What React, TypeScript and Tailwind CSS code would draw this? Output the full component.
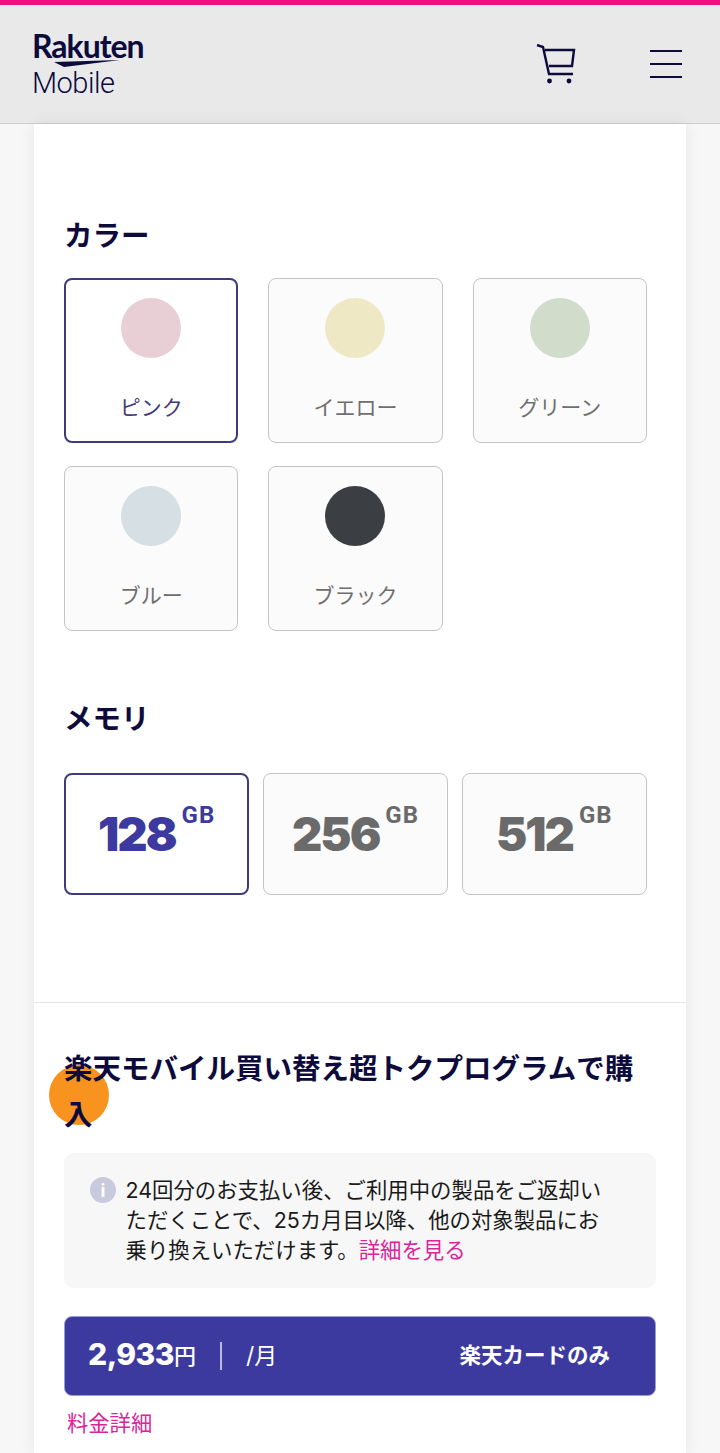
const jp = "font-['Inter','Noto_Sans_CJK_JP',sans-serif]";

const colors = [
  { name: "ピンク", swatch: "bg-[#e8cfd5]", active: true },
  { name: "イエロー", swatch: "bg-[#efe8c4]", active: false },
  { name: "グリーン", swatch: "bg-[#d2dccb]", active: false },
  { name: "ブルー", swatch: "bg-[#d5dfe4]", active: false },
  { name: "ブラック", swatch: "bg-[#3b3e42]", active: false },
];

const memory = [
  { size: "128", active: true },
  { size: "256", active: false },
  { size: "512", active: false },
];

function Logo() {
  return (
    <div className="flex w-[112px] flex-col">
      <span className="font-['Lato',sans-serif] text-[32px] leading-[28px] font-bold tracking-[-1px] text-[#0d0a3c]">Rakuten</span>
      <svg width="90" height="8" viewBox="0 0 90 8" className="ml-[22px]">
        <path d="M0 2 L66 0 L10 7 Z" fill="#0d0a3c" />
      </svg>
      <span className="mt-[2px] font-['Roboto',sans-serif] text-[29px] leading-[27px] font-light tracking-[-0.5px] text-[#0d0a3c]">Mobile</span>
    </div>
  );
}

function CartIcon() {
  return (
    <svg width="40" height="40" viewBox="0 0 40 40" fill="none" stroke="#0d0a3c" strokeWidth="2.4">
      <path d="M1 1 L7 3 L13 30 H37" />
      <path d="M9 6 H38 L36 22 H13" />
      <circle cx="13.5" cy="37" r="2.4" fill="#0d0a3c" stroke="none" />
      <circle cx="33" cy="37" r="2.4" fill="#0d0a3c" stroke="none" />
    </svg>
  );
}

function MenuIcon() {
  return (
    <div className="flex w-[32px] flex-col gap-[10.5px]">
      <span className="h-[2.5px] bg-[#0d0a3c]" />
      <span className="h-[2.5px] bg-[#0d0a3c]" />
      <span className="h-[2.5px] bg-[#0d0a3c]" />
    </div>
  );
}

function ColorCard({ name, swatch, active }: { name: string; swatch: string; active: boolean }) {
  return (
    <div
      className={
        active
          ? "flex h-[165px] flex-col items-center rounded-lg border-2 border-[#3f3a7e] bg-white pt-[18px] text-[#3f3a7e]"
          : "flex h-[165px] flex-col items-center rounded-lg border border-[#c4c4c4] bg-[#fbfbfb] pt-[19px] text-[#6f6f6f]"
      }
    >
      <span className={`h-[60px] w-[60px] rounded-full ${swatch}`} />
      <span className="mt-[34px] text-[21px] leading-[32px]">{name}</span>
    </div>
  );
}

function MemoryCard({ size, active }: { size: string; active: boolean }) {
  return (
    <div
      className={
        active
          ? "flex h-[122px] items-start justify-center rounded-lg border-2 border-[#3f3a7e] bg-white pt-[29px] text-[#3c3a9f]"
          : "flex h-[122px] items-start justify-center rounded-lg border border-[#c4c4c4] bg-[#fbfbfb] pt-[30px] text-[#6a6a6a]"
      }
    >
      <span className="font-['Inter',sans-serif] text-[47px] leading-[60px] font-black tracking-[-2px]">{size}</span>
      <span className="ml-[6px] font-['Roboto',sans-serif] text-[24px] leading-[22px] font-bold tracking-[1px]">GB</span>
    </div>
  );
}

export default function App() {
  return (
    <div className={`h-[1453px] overflow-hidden bg-[#f7f7f7] ${jp}`}>
      <div className="h-[5px] bg-[#eb0f80]" />
      <header className="flex h-[119px] items-center justify-between border-b border-[#cfcfcf] bg-[#e9e9ea] pr-[38px] pl-[32px]">
        <Logo />
        <div className="flex items-center gap-[74px]">
          <CartIcon />
          <MenuIcon />
        </div>
      </header>

      <main className="relative mx-[34px] h-[1329px] bg-white shadow-[0_0_14px_rgba(0,0,0,0.08)]">
        <section className="pt-[90px] pr-[39px] pl-[30px]">
          <h2 className="text-[28.5px] leading-[44px] font-bold text-[#0d0a3c]">カラー</h2>
          <div className="mt-[20px] grid grid-cols-3 gap-x-[30px] gap-y-[23px]">
            {colors.map((c) => (
              <ColorCard key={c.name} {...c} />
            ))}
          </div>

          <h2 className="mt-[66px] text-[28.5px] leading-[44px] font-bold text-[#0d0a3c]">メモリ</h2>
          <div className="mt-[32px] grid grid-cols-3 gap-x-[13.5px]">
            {memory.map((m) => (
              <MemoryCard key={m.size} {...m} />
            ))}
          </div>
        </section>

        <div className="mt-[107px] border-t border-[#e6e6e6] pt-[43px] pr-[30px] pl-[30px]">
          <span className="absolute top-[941px] left-[15px] h-[60px] w-[60px] rounded-full bg-[#f7931e]" />
          <h2 className="relative text-[28.5px] leading-[46px] font-bold text-[#0d0a3c]">楽天モバイル買い替え超トクプログラムで購入</h2>

          <div className="mt-[15px] flex h-[135px] rounded-[10px] bg-[#f7f7f7] pt-[22px] pr-[50px] pl-[26px]">
            <span className="mt-[2px] flex h-[26px] w-[26px] shrink-0 items-center justify-center rounded-full bg-[#c9cade] text-[18px] font-bold text-white">i</span>
            <p className="ml-[9.5px] text-[21.4px] leading-[30px] text-[#1a1a1a]">
              24回分のお支払い後、ご利用中の製品をご返却いただくことで、25カ月目以降、他の対象製品にお乗り換えいただけます。
              <span className="text-[#d9259c]">詳細を見る</span>
            </p>
          </div>

          <div className="mt-[28px] flex h-[80px] items-center rounded-lg border border-[#9c9bd6] bg-[#3c3a9f] pr-[45px] pl-[23px] text-white">
            <span className="mb-[4px] text-[30px] leading-[40px] font-extrabold tracking-[-0.5px]">2,933</span>
            <span className="text-[22px] font-medium">円</span>
            <span className="mx-[24px] h-[28px] w-[2px] bg-[#b9b8e0]" />
            <span className="text-[23px]">/月</span>
            <span className="mb-[2px] ml-auto text-[21.5px] font-bold">楽天カードのみ</span>
          </div>

          <p className="mt-[11px] ml-[3px] text-[21.3px] leading-[32px] text-[#d9259c]">料金詳細</p>
        </div>
      </main>
    </div>
  );
}
